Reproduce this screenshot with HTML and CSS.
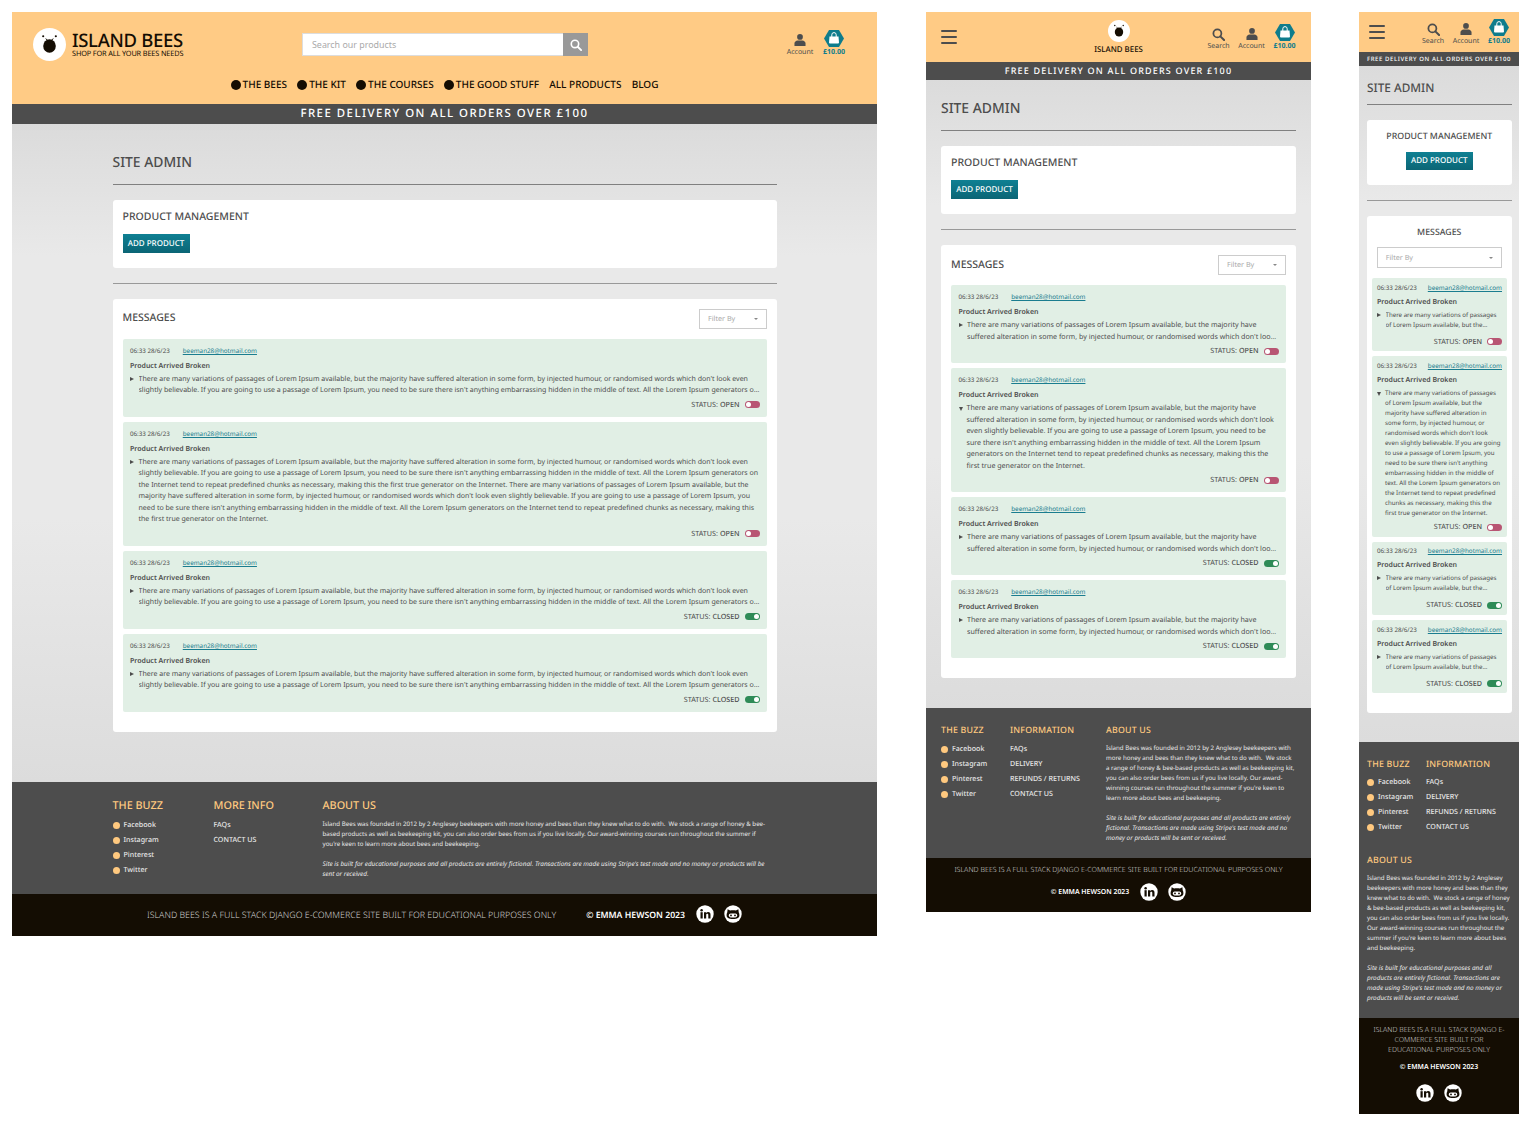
FILE: index.html
```html
<!DOCTYPE html>
<html lang="en">
<head>
    <meta charset="UTF-8">
    <meta name="viewport" content="width=device-width, initial-scale=1.0">
    <title>Island Bees - Site Admin</title>
    <link rel="stylesheet" href="styles.css">
</head>
<body>

<!-- shared icons -->
<svg class="sprite" width="0" height="0">
    <symbol id="i-logo" viewBox="0 0 34 34">
        <circle cx="17" cy="17" r="17" fill="#fff"/>
        <ellipse cx="17" cy="18.500" rx="6.500" ry="7" fill="#140d03"/>
        <circle cx="10.500" cy="8.500" r="1.100" fill="#140d03"/>
        <circle cx="23.500" cy="8.500" r="1.100" fill="#140d03"/>
        <path d="M13 11l2 1.500M21 11l-2 1.500" stroke="#140d03" stroke-width="1"/>
    </symbol>
    <symbol id="i-search" viewBox="0 0 14 14">
        <circle cx="5.800" cy="5.800" r="4.300" fill="none" stroke="currentColor" stroke-width="1.900"/>
        <path d="M9 9l4 4" stroke="currentColor" stroke-width="2.200" stroke-linecap="round"/>
    </symbol>
    <symbol id="i-account" viewBox="0 0 12 13">
        <circle cx="6" cy="3.200" r="3.100" fill="currentColor"/>
        <path d="M0 13v-2.600C0 8.400 1.600 7 3.400 7h5.200C10.400 7 12 8.400 12 10.400V13z" fill="currentColor"/>
    </symbol>
    <symbol id="i-cart" viewBox="0 0 20 17">
        <path d="M5 0h10l5 8.500-5 8.500H5L0 8.500z" fill="#0e7c8c"/>
        <path d="M5.500 6.500h9l.5 6a1 1 0 0 1-1 1H6a1 1 0 0 1-1-1z" fill="#fff"/>
        <path d="M7.800 7V4.800a2.200 2.200 0 0 1 4.400 0V7" fill="none" stroke="#fff" stroke-width="1"/>
    </symbol>
    <symbol id="i-linkedin" viewBox="0 0 18 18">
        <circle cx="9" cy="9" r="8.700" fill="#fff"/>
        <circle cx="5.600" cy="5.200" r="1.250" fill="#140d03"/>
        <rect x="4.500" y="7.200" width="2.200" height="6.300" fill="#140d03"/>
        <path d="M8 7.200h2.100v.9c.5-.7 1.200-1.100 2.100-1.100 1.600 0 2.300 1 2.300 2.700v3.800h-2.200v-3.400c0-.8-.3-1.300-1-1.300s-1.100.5-1.100 1.300v3.400H8z" fill="#140d03"/>
    </symbol>
    <symbol id="i-github" viewBox="0 0 18 18">
        <circle cx="9" cy="9" r="8.700" fill="#fff"/>
        <path d="M3.600 4.300l2.500 1.300c1.900-.5 3.900-.5 5.800 0l2.500-1.300.3 3c.6 1 .7 2 .7 3 0 2.600-2 3.700-6.400 3.700s-6.400-1.100-6.400-3.700c0-1 .1-2 .7-3z" fill="#140d03"/>
        <rect x="4.800" y="8.400" width="8.400" height="4" rx="1.800" fill="#fff"/>
        <circle cx="7" cy="10.400" r=".9" fill="#140d03"/>
        <circle cx="11" cy="10.400" r=".9" fill="#140d03"/>
    </symbol>
</svg>

<div class="canvas">

    <!-- desktop -->
    <div class="frame frame-lg">
        <header class="header">
            <div class="head-top">
                <a class="brand">
                    <svg class="brand-logo"><use href="#i-logo"/></svg>
                    <span class="brand-text">
                        <span class="brand-name">ISLAND BEES</span>
                        <span class="brand-sub">SHOP FOR ALL YOUR BEES NEEDS</span>
                    </span>
                </a>
                <form class="search">
                    <input type="text" placeholder="Search our products">
                    <button type="button"><svg class="search-icon"><use href="#i-search"/></svg></button>
                </form>
                <div class="shop-links">
                    <a class="shop-item"><svg class="ico-account"><use href="#i-account"/></svg><span>Account</span></a>
                    <a class="shop-item cart"><svg class="ico-cart"><use href="#i-cart"/></svg><span>£10.00</span></a>
                </div>
            </div>
            <nav class="nav">
                <a class="dot">THE BEES</a>
                <a class="dot">THE KIT</a>
                <a class="dot">THE COURSES</a>
                <a class="dot">THE GOOD STUFF</a>
                <a>ALL PRODUCTS</a>
                <a>BLOG</a>
            </nav>
        </header>
        <div class="banner">FREE DELIVERY ON ALL ORDERS OVER £100</div>
        <main class="main">
            <h1 class="page-title">SITE ADMIN</h1>
            <section class="card card-products">
                <h2>PRODUCT MANAGEMENT</h2>
                <a class="btn">ADD PRODUCT</a>
            </section>
            <hr class="rule">
            <section class="card card-messages">
                <div class="messages-head">
                    <h2>MESSAGES</h2>
                    <div class="filter"><span>Filter By</span><i class="caret"></i></div>
                </div>
                <article class="msg">
                    <div class="msg-meta"><span>06:33 28/6/23</span><a>beeman28@hotmail.com</a></div>
                    <div class="msg-title">Product Arrived Broken</div>
                    <div class="msg-body"><i class="tri"></i><p class="msg-text clamp">There are many variations of passages of Lorem Ipsum available, but the majority have suffered alteration in some form, by injected humour, or randomised words which don't look even slightly believable. If you are going to use a passage of Lorem Ipsum, you need to be sure there isn't anything embarrassing hidden in the middle of text. All the Lorem Ipsum generators on the Internet tend to repeat predefined chunks as necessary, making this the first true generator on the Internet.</p></div>
                    <div class="msg-status">STATUS: <b>OPEN</b><i class="toggle open"></i></div>
                </article>
                <article class="msg">
                    <div class="msg-meta"><span>06:33 28/6/23</span><a>beeman28@hotmail.com</a></div>
                    <div class="msg-title">Product Arrived Broken</div>
                    <div class="msg-body"><i class="tri"></i><p class="msg-text">There are many variations of passages of Lorem Ipsum available, but the majority have suffered alteration in some form, by injected humour, or randomised words which don't look even slightly believable. If you are going to use a passage of Lorem Ipsum, you need to be sure there isn't anything embarrassing hidden in the middle of text. All the Lorem Ipsum generators on the Internet tend to repeat predefined chunks as necessary, making this the first true generator on the Internet. There are many variations of passages of Lorem Ipsum available, but the majority have suffered alteration in some form, by injected humour, or randomised words which don't look even slightly believable. If you are going to use a passage of Lorem Ipsum, you need to be sure there isn't anything embarrassing hidden in the middle of text. All the Lorem Ipsum generators on the Internet tend to repeat predefined chunks as necessary, making this the first true generator on the Internet.</p></div>
                    <div class="msg-status">STATUS: <b>OPEN</b><i class="toggle open"></i></div>
                </article>
                <article class="msg">
                    <div class="msg-meta"><span>06:33 28/6/23</span><a>beeman28@hotmail.com</a></div>
                    <div class="msg-title">Product Arrived Broken</div>
                    <div class="msg-body"><i class="tri"></i><p class="msg-text clamp">There are many variations of passages of Lorem Ipsum available, but the majority have suffered alteration in some form, by injected humour, or randomised words which don't look even slightly believable. If you are going to use a passage of Lorem Ipsum, you need to be sure there isn't anything embarrassing hidden in the middle of text. All the Lorem Ipsum generators on the Internet tend to repeat predefined chunks as necessary, making this the first true generator on the Internet.</p></div>
                    <div class="msg-status">STATUS: <b>CLOSED</b><i class="toggle closed"></i></div>
                </article>
                <article class="msg">
                    <div class="msg-meta"><span>06:33 28/6/23</span><a>beeman28@hotmail.com</a></div>
                    <div class="msg-title">Product Arrived Broken</div>
                    <div class="msg-body"><i class="tri"></i><p class="msg-text clamp">There are many variations of passages of Lorem Ipsum available, but the majority have suffered alteration in some form, by injected humour, or randomised words which don't look even slightly believable. If you are going to use a passage of Lorem Ipsum, you need to be sure there isn't anything embarrassing hidden in the middle of text. All the Lorem Ipsum generators on the Internet tend to repeat predefined chunks as necessary, making this the first true generator on the Internet.</p></div>
                    <div class="msg-status">STATUS: <b>CLOSED</b><i class="toggle closed"></i></div>
                </article>
            </section>
        </main>
        <footer class="footer">
            <div class="foot-col col-buzz">
                <h3>THE BUZZ</h3>
                <ul class="foot-list bees">
                    <li>Facebook</li>
                    <li>Instagram</li>
                    <li>Pinterest</li>
                    <li>Twitter</li>
                </ul>
            </div>
            <div class="foot-col col-info">
                <h3>MORE INFO</h3>
                <ul class="foot-list">
                    <li>FAQs</li>
                    <li>CONTACT US</li>
                </ul>
            </div>
            <div class="foot-col col-about">
                <h3>ABOUT US</h3>
                <p>Island Bees was founded in 2012 by 2 Anglesey beekeepers with more honey and bees than they knew what to do with.&nbsp; We stock a range of honey &amp; bee-based products as well as beekeeping kit, you can also order bees from us if you live locally. Our award-winning courses run throughout the summer if you're keen to learn more about bees and beekeeping.</p>
                <p class="note">Site is built for educational purposes and all products are entirely fictional. Transactions are made using Stripe's test mode and no money or products will be sent or received.</p>
            </div>
        </footer>
        <div class="foot-bar">
            <span class="foot-blurb">ISLAND BEES IS A FULL STACK DJANGO E-COMMERCE SITE BUILT FOR EDUCATIONAL PURPOSES ONLY</span>
            <span class="foot-copy">© EMMA HEWSON 2023</span>
            <span class="foot-social"><svg><use href="#i-linkedin"/></svg><svg><use href="#i-github"/></svg></span>
        </div>
    </div>

    <!-- tablet -->
    <div class="frame frame-md">
        <header class="header">
            <div class="burger"><i></i><i></i><i></i></div>
            <a class="brand">
                <svg class="brand-logo"><use href="#i-logo"/></svg>
                <span class="brand-name">ISLAND BEES</span>
            </a>
            <div class="shop-links">
                <a class="shop-item"><svg class="ico-search"><use href="#i-search"/></svg><span>Search</span></a>
                <a class="shop-item"><svg class="ico-account"><use href="#i-account"/></svg><span>Account</span></a>
                <a class="shop-item cart"><svg class="ico-cart"><use href="#i-cart"/></svg><span>£10.00</span></a>
            </div>
        </header>
        <div class="banner">FREE DELIVERY ON ALL ORDERS OVER £100</div>
        <main class="main">
            <h1 class="page-title">SITE ADMIN</h1>
            <section class="card card-products">
                <h2>PRODUCT MANAGEMENT</h2>
                <a class="btn">ADD PRODUCT</a>
            </section>
            <hr class="rule">
            <section class="card card-messages">
                <div class="messages-head">
                    <h2>MESSAGES</h2>
                    <div class="filter"><span>Filter By</span><i class="caret"></i></div>
                </div>
                <article class="msg">
                    <div class="msg-meta"><span>06:33 28/6/23</span><a>beeman28@hotmail.com</a></div>
                    <div class="msg-title">Product Arrived Broken</div>
                    <div class="msg-body"><i class="tri"></i><p class="msg-text clamp">There are many variations of passages of Lorem Ipsum available, but the majority have suffered alteration in some form, by injected humour, or randomised words which don't look even slightly believable. If you are going to use a passage of Lorem Ipsum, you need to be sure there isn't anything embarrassing hidden in the middle of text. All the Lorem Ipsum generators on the Internet tend to repeat predefined chunks as necessary, making this the first true generator on the Internet.</p></div>
                    <div class="msg-status">STATUS: <b>OPEN</b><i class="toggle open"></i></div>
                </article>
                <article class="msg">
                    <div class="msg-meta"><span>06:33 28/6/23</span><a>beeman28@hotmail.com</a></div>
                    <div class="msg-title">Product Arrived Broken</div>
                    <div class="msg-body"><i class="tri down"></i><p class="msg-text">There are many variations of passages of Lorem Ipsum available, but the majority have suffered alteration in some form, by injected humour, or randomised words which don't look even slightly believable. If you are going to use a passage of Lorem Ipsum, you need to be sure there isn't anything embarrassing hidden in the middle of text. All the Lorem Ipsum generators on the Internet tend to repeat predefined chunks as necessary, making this the first true generator on the Internet.</p></div>
                    <div class="msg-status">STATUS: <b>OPEN</b><i class="toggle open"></i></div>
                </article>
                <article class="msg">
                    <div class="msg-meta"><span>06:33 28/6/23</span><a>beeman28@hotmail.com</a></div>
                    <div class="msg-title">Product Arrived Broken</div>
                    <div class="msg-body"><i class="tri"></i><p class="msg-text clamp">There are many variations of passages of Lorem Ipsum available, but the majority have suffered alteration in some form, by injected humour, or randomised words which don't look even slightly believable. If you are going to use a passage of Lorem Ipsum, you need to be sure there isn't anything embarrassing hidden in the middle of text. All the Lorem Ipsum generators on the Internet tend to repeat predefined chunks as necessary, making this the first true generator on the Internet.</p></div>
                    <div class="msg-status">STATUS: <b>CLOSED</b><i class="toggle closed"></i></div>
                </article>
                <article class="msg">
                    <div class="msg-meta"><span>06:33 28/6/23</span><a>beeman28@hotmail.com</a></div>
                    <div class="msg-title">Product Arrived Broken</div>
                    <div class="msg-body"><i class="tri"></i><p class="msg-text clamp">There are many variations of passages of Lorem Ipsum available, but the majority have suffered alteration in some form, by injected humour, or randomised words which don't look even slightly believable. If you are going to use a passage of Lorem Ipsum, you need to be sure there isn't anything embarrassing hidden in the middle of text. All the Lorem Ipsum generators on the Internet tend to repeat predefined chunks as necessary, making this the first true generator on the Internet.</p></div>
                    <div class="msg-status">STATUS: <b>CLOSED</b><i class="toggle closed"></i></div>
                </article>
            </section>
        </main>
        <footer class="footer">
            <div class="foot-col col-buzz">
                <h3>THE BUZZ</h3>
                <ul class="foot-list bees">
                    <li>Facebook</li>
                    <li>Instagram</li>
                    <li>Pinterest</li>
                    <li>Twitter</li>
                </ul>
            </div>
            <div class="foot-col col-info">
                <h3>INFORMATION</h3>
                <ul class="foot-list">
                    <li>FAQs</li>
                    <li>DELIVERY</li>
                    <li>REFUNDS / RETURNS</li>
                    <li>CONTACT US</li>
                </ul>
            </div>
            <div class="foot-col col-about">
                <h3>ABOUT US</h3>
                <p>Island Bees was founded in 2012 by 2 Anglesey beekeepers with more honey and bees than they knew what to do with.&nbsp; We stock a range of honey &amp; bee-based products as well as beekeeping kit, you can also order bees from us if you live locally. Our award-winning courses run throughout the summer if you're keen to learn more about bees and beekeeping.</p>
                <p class="note">Site is built for educational purposes and all products are entirely fictional. Transactions are made using Stripe's test mode and no money or products will be sent or received.</p>
            </div>
        </footer>
        <div class="foot-bar">
            <span class="foot-blurb">ISLAND BEES IS A FULL STACK DJANGO E-COMMERCE SITE BUILT FOR EDUCATIONAL PURPOSES ONLY</span>
            <div class="foot-row">
                <span class="foot-copy">© EMMA HEWSON 2023</span>
                <span class="foot-social"><svg><use href="#i-linkedin"/></svg><svg><use href="#i-github"/></svg></span>
            </div>
        </div>
    </div>

    <!-- mobile -->
    <div class="frame frame-sm">
        <header class="header">
            <div class="burger"><i></i><i></i><i></i></div>
            <div class="shop-links">
                <a class="shop-item"><svg class="ico-search"><use href="#i-search"/></svg><span>Search</span></a>
                <a class="shop-item"><svg class="ico-account"><use href="#i-account"/></svg><span>Account</span></a>
                <a class="shop-item cart"><svg class="ico-cart"><use href="#i-cart"/></svg><span>£10.00</span></a>
            </div>
        </header>
        <div class="banner">FREE DELIVERY ON ALL ORDERS OVER £100</div>
        <main class="main">
            <h1 class="page-title">SITE ADMIN</h1>
            <section class="card card-products">
                <h2>PRODUCT MANAGEMENT</h2>
                <a class="btn">ADD PRODUCT</a>
            </section>
            <hr class="rule">
            <section class="card card-messages">
                <div class="messages-head">
                    <h2>MESSAGES</h2>
                    <div class="filter"><span>Filter By</span><i class="caret"></i></div>
                </div>
                <article class="msg">
                    <div class="msg-meta"><span>06:33 28/6/23</span><a>beeman28@hotmail.com</a></div>
                    <div class="msg-title">Product Arrived Broken</div>
                    <div class="msg-body"><i class="tri"></i><p class="msg-text clamp">There are many variations of passages of Lorem Ipsum available, but the majority have suffered alteration in some form, by injected humour, or randomised words which don't look even slightly believable. If you are going to use a passage of Lorem Ipsum, you need to be sure there isn't anything embarrassing hidden in the middle of text. All the Lorem Ipsum generators on the Internet tend to repeat predefined chunks as necessary, making this the first true generator on the Internet.</p></div>
                    <div class="msg-status">STATUS: <b>OPEN</b><i class="toggle open"></i></div>
                </article>
                <article class="msg">
                    <div class="msg-meta"><span>06:33 28/6/23</span><a>beeman28@hotmail.com</a></div>
                    <div class="msg-title">Product Arrived Broken</div>
                    <div class="msg-body"><i class="tri down"></i><p class="msg-text">There are many variations of passages of Lorem Ipsum available, but the majority have suffered alteration in some form, by injected humour, or randomised words which don't look even slightly believable. If you are going to use a passage of Lorem Ipsum, you need to be sure there isn't anything embarrassing hidden in the middle of text. All the Lorem Ipsum generators on the Internet tend to repeat predefined chunks as necessary, making this the first true generator on the Internet.</p></div>
                    <div class="msg-status">STATUS: <b>OPEN</b><i class="toggle open"></i></div>
                </article>
                <article class="msg">
                    <div class="msg-meta"><span>06:33 28/6/23</span><a>beeman28@hotmail.com</a></div>
                    <div class="msg-title">Product Arrived Broken</div>
                    <div class="msg-body"><i class="tri"></i><p class="msg-text clamp">There are many variations of passages of Lorem Ipsum available, but the majority have suffered alteration in some form, by injected humour, or randomised words which don't look even slightly believable. If you are going to use a passage of Lorem Ipsum, you need to be sure there isn't anything embarrassing hidden in the middle of text. All the Lorem Ipsum generators on the Internet tend to repeat predefined chunks as necessary, making this the first true generator on the Internet.</p></div>
                    <div class="msg-status">STATUS: <b>CLOSED</b><i class="toggle closed"></i></div>
                </article>
                <article class="msg">
                    <div class="msg-meta"><span>06:33 28/6/23</span><a>beeman28@hotmail.com</a></div>
                    <div class="msg-title">Product Arrived Broken</div>
                    <div class="msg-body"><i class="tri"></i><p class="msg-text clamp">There are many variations of passages of Lorem Ipsum available, but the majority have suffered alteration in some form, by injected humour, or randomised words which don't look even slightly believable. If you are going to use a passage of Lorem Ipsum, you need to be sure there isn't anything embarrassing hidden in the middle of text. All the Lorem Ipsum generators on the Internet tend to repeat predefined chunks as necessary, making this the first true generator on the Internet.</p></div>
                    <div class="msg-status">STATUS: <b>CLOSED</b><i class="toggle closed"></i></div>
                </article>
            </section>
        </main>
        <footer class="footer">
            <div class="foot-col col-buzz">
                <h3>THE BUZZ</h3>
                <ul class="foot-list bees">
                    <li>Facebook</li>
                    <li>Instagram</li>
                    <li>Pinterest</li>
                    <li>Twitter</li>
                </ul>
            </div>
            <div class="foot-col col-info">
                <h3>INFORMATION</h3>
                <ul class="foot-list">
                    <li>FAQs</li>
                    <li>DELIVERY</li>
                    <li>REFUNDS / RETURNS</li>
                    <li>CONTACT US</li>
                </ul>
            </div>
            <div class="foot-col col-about">
                <h3>ABOUT US</h3>
                <p>Island Bees was founded in 2012 by 2 Anglesey beekeepers with more honey and bees than they knew what to do with.&nbsp; We stock a range of honey &amp; bee-based products as well as beekeeping kit, you can also order bees from us if you live locally. Our award-winning courses run throughout the summer if you're keen to learn more about bees and beekeeping.</p>
                <p class="note">Site is built for educational purposes and all products are entirely fictional. Transactions are made using Stripe's test mode and no money or products will be sent or received.</p>
            </div>
        </footer>
        <div class="foot-bar">
            <span class="foot-blurb">ISLAND BEES IS A FULL STACK DJANGO E-COMMERCE SITE BUILT FOR EDUCATIONAL PURPOSES ONLY</span>
            <span class="foot-copy">© EMMA HEWSON 2023</span>
            <span class="foot-social"><svg><use href="#i-linkedin"/></svg><svg><use href="#i-github"/></svg></span>
        </div>
    </div>

</div>

</body>
</html>
```

FILE: styles.css
```css
* {
    box-sizing: border-box;
}
body {
    margin: 0;
    background-color: #fff;
    font-family: "Noto Sans", Arial, sans-serif;
    color: #4d4d4d;
    text-rendering: geometricPrecision;
}
h1, h2, h3, p, ul {
    margin: 0;
    padding: 0;
    font-weight: 500;
}
ul {
    list-style: none;
}
.sprite {
    position: absolute;
}
.canvas {
    display: flex;
    align-items: flex-start;
    padding: 12px 0 0 12px;
}
.frame {
    flex: none;
}
.frame-lg {
    width: 865px;
    margin-right: 49px;
}
.frame-md {
    width: 385px;
    margin-right: 48px;
}
.frame-sm {
    width: 160px;
}

/* header */
.header {
    background-color: #ffcb85;
    color: #140d03;
}
.brand {
    display: flex;
    align-items: center;
}
.brand-logo {
    flex: none;
}
.brand-name {
    font-weight: 500;
}
.shop-links {
    display: flex;
    align-items: flex-end;
}
.shop-item {
    display: flex;
    flex-direction: column;
    align-items: center;
    width: 33px;
    font-size: 7px;
    line-height: 8px;
    color: #4d4d4d;
}
.shop-item.cart {
    color: #0e7c8c;
    font-weight: 700;
}
.ico-cart {
    width: 20px;
    height: 17px;
    margin-bottom: 2px;
}
.ico-account {
    width: 12px;
    height: 12px;
    margin-bottom: 3px;
}
.ico-search {
    width: 13px;
    height: 13px;
    margin-bottom: 2px;
}
.burger {
    display: flex;
    flex-direction: column;
    gap: 3.800px;
    width: 16px;
}
.burger i {
    display: block;
    height: 2.400px;
    border-radius: 2px;
    background-color: #4d4d4d;
}

.frame-lg .header {
    height: 91.500px;
    padding-top: 14.500px;
}
.head-top {
    display: flex;
    align-items: center;
    height: 36px;
    padding: 0 26px 0 21px;
}
.frame-lg .brand {
    width: 269px;
}
.frame-lg .brand-logo {
    width: 33px;
    height: 33px;
    margin-right: 6px;
}
.brand-text {
    display: flex;
    flex-direction: column;
}
.frame-lg .brand-name {
    font-size: 18.500px;
    line-height: 19px;
    letter-spacing: -0.3px;
}
.brand-sub {
    font-size: 7.350px;
    line-height: 9px;
    letter-spacing: -0.15px;
}
.search {
    display: flex;
    width: 286px;
    height: 23px;
    margin: 0;
}
.search input {
    flex: 1;
    min-width: 0;
    padding: 0 9px;
    border: 1px solid #ddd;
    border-right: 0;
    background-color: #fff;
    font-family: inherit;
    font-size: 8.900px;
    color: #999;
}
.search input::placeholder {
    color: #aaa;
}
.search button {
    display: flex;
    align-items: center;
    justify-content: center;
    width: 25px;
    padding: 0;
    border: 0;
    background-color: #999;
    color: #fff;
}
.search-icon {
    width: 12px;
    height: 12px;
}
.frame-lg .shop-links {
    margin: 0 0 3px auto;
}
.frame-lg .shop-item {
    width: 34px;
}
.nav {
    display: flex;
    justify-content: center;
    gap: 10.200px;
    height: 14px;
    margin-top: 14.500px;
    font-size: 10px;
    line-height: 14px;
    font-weight: 500;
}
.nav .dot::before {
    content: "";
    display: inline-block;
    width: 10px;
    height: 10px;
    margin-right: 2px;
    border-radius: 50%;
    background-color: #140d03;
    vertical-align: -1.500px;
}

.frame-md .header {
    display: grid;
    grid-template-columns: 1fr auto 1fr;
    align-items: center;
    height: 50px;
    padding: 0 10px;
}
.frame-md .burger {
    margin-left: 5px;
}
.frame-md .brand {
    flex-direction: column;
}
.frame-md .brand-logo {
    width: 22px;
    height: 22px;
}
.frame-md .brand-name {
    margin-top: 3px;
    font-size: 7.900px;
    line-height: 10px;
}
.frame-md .shop-links {
    justify-self: end;
}

.frame-sm .header {
    display: flex;
    align-items: center;
    justify-content: space-between;
    height: 40px;
    padding: 0 3.500px 0 10px;
}

/* delivery strip */
.banner {
    height: 20px;
    background-color: #4d4d4d;
    color: #fff;
    text-align: center;
    font-size: 11.400px;
    line-height: 20px;
    font-weight: 500;
    letter-spacing: 1.500px;
}
.frame-md .banner {
    height: 18px;
    font-size: 9px;
    line-height: 18px;
    letter-spacing: 1.180px;
}
.frame-sm .banner {
    height: 14px;
    font-size: 6px;
    line-height: 14px;
    letter-spacing: .58px;
}

/* main */
.main {
    background: linear-gradient(#dbdbdb, #e9e9e9 20%, #e9e9e9 60%, #dcdcdc);
}
.frame-lg .main {
    padding: 28px 100px 50.500px 100.500px;
}
.frame-md .main {
    padding: 18px 15px 30px;
}
.frame-sm .main {
    padding: 14px 7.500px 28.400px 8px;
}
.page-title {
    padding-bottom: 10px;
    border-bottom: 1px solid #808080;
    font-size: 13.900px;
    line-height: 22px;
}
.frame-sm .page-title {
    padding-bottom: 7px;
    font-size: 11.800px;
    line-height: 17px;
}
.card {
    padding: 10px;
    border-radius: 3px;
    background-color: #fff;
}
.card h2 {
    font-size: 10.500px;
    line-height: 15px;
}
.frame-sm .card h2 {
    font-size: 8.800px;
    line-height: 13px;
}
.card-products {
    height: 68px;
    margin-top: 15px;
}
.btn {
    display: block;
    width: 67px;
    height: 19px;
    margin-top: 9px;
    background: linear-gradient(#0f8093, #0b6575);
    color: #fff;
    text-align: center;
    font-size: 8px;
    line-height: 19px;
    font-weight: 500;
}
.frame-sm .card-products {
    height: 65px;
    text-align: center;
}
.frame-sm .btn {
    height: 18px;
    margin: 9px auto 0;
    line-height: 18px;
}
.rule {
    height: 1px;
    margin: 15px 0;
    border: 0;
    background-color: #999;
}
.card-messages {
    padding-bottom: 20px;
}
.messages-head {
    display: flex;
    align-items: center;
    justify-content: space-between;
    height: 20px;
    margin-bottom: 10px;
}
.filter {
    display: flex;
    align-items: center;
    justify-content: space-between;
    width: 68px;
    height: 20px;
    padding: 0 8px;
    border: 1px solid #ccc;
    font-size: 7.200px;
    color: #aaa;
}
.caret {
    width: 0;
    height: 0;
    border: 2.500px solid transparent;
    border-top: 2.500px solid #888;
    border-bottom: 0;
}
.frame-sm .card-messages {
    padding: 9.500px 5px 20px;
}
.frame-sm .messages-head {
    flex-direction: column;
    height: auto;
    margin-bottom: 10px;
}
.frame-sm .filter {
    width: 125px;
    height: 21px;
    margin-top: 8.500px;
}

/* message rows */
.msg {
    padding: 7px 7.500px 7px;
    border-radius: 2px;
    background-color: #e1efe5;
    font-size: 7.200px;
}
.msg + .msg {
    margin-top: 5px;
}
.msg-meta {
    display: flex;
    gap: 13px;
    height: 10px;
    line-height: 10px;
    font-size: 6.200px;
}
.msg-meta a {
    color: #1a7d8f;
    text-decoration: underline;
    font-size: 6.300px;
}
.msg-title {
    height: 10px;
    margin-top: 6px;
    font-size: 7px;
    line-height: 10px;
    font-weight: 600;
}
.msg-body {
    display: flex;
    margin-top: 2px;
}
.tri {
    flex: none;
    width: 0;
    height: 0;
    margin: 3px 4.500px 0 0;
    border-left: 4.500px solid #4d4d4d;
    border-top: 2.500px solid transparent;
    border-bottom: 2.500px solid transparent;
}
.tri.down {
    margin: 4px 4px 0 0;
    border-top: 4.500px solid #4d4d4d;
    border-left: 2.500px solid transparent;
    border-right: 2.500px solid transparent;
    border-bottom: 0;
}
.msg-text {
    flex: 1;
    min-width: 0;
    font-size: 7.100px;
    line-height: 11.500px;
    font-weight: 400;
}
.frame-lg .msg-text {
    font-size: 7.030px;
}
.msg-text.clamp {
    display: -webkit-box;
    -webkit-box-orient: vertical;
    -webkit-line-clamp: 2;
    overflow: hidden;
}
.msg-status {
    display: flex;
    align-items: center;
    justify-content: flex-end;
    gap: 2px;
    height: 10px;
    margin-top: 3px;
}
.msg-status b {
    font-weight: 500;
}
.toggle {
    position: relative;
    width: 15px;
    height: 7px;
    margin-left: 3px;
    border-radius: 4px;
}
.toggle.open {
    background-color: #b85573;
}
.toggle.closed {
    background-color: #2e8b57;
}
.toggle::after {
    content: "";
    position: absolute;
    top: 1px;
    width: 5px;
    height: 5px;
    border-radius: 50%;
    background-color: #fff;
}
.toggle.open::after {
    left: 1px;
}
.toggle.closed::after {
    right: 1px;
}
.frame-sm .msg {
    padding: 4.500px 4.500px 4.700px 5px;
}
.frame-sm .msg-title {
    margin-top: 5px;
}
.frame-sm .msg-meta {
    justify-content: space-between;
    gap: 0;
}
.frame-sm .msg-text {
    font-size: 6.150px;
    line-height: 10px;
}
.frame-sm .msg-text.clamp {
    margin-bottom: 2.500px;
}
.frame-sm .msg-status {
    margin-top: 4.500px;
}

/* footer */
.footer {
    display: flex;
    background-color: #4d4d4d;
    color: #e8e8e8;
}
.foot-col h3 {
    height: 12px;
    color: #ffc97f;
    font-size: 10.800px;
    line-height: 12px;
}
.frame-md .foot-col h3, .frame-sm .foot-col h3 {
    font-size: 8.800px;
    letter-spacing: .2px;
}
.foot-list li {
    font-size: 7.100px;
    line-height: 15px;
}
.foot-list.bees li {
    display: flex;
    align-items: center;
}
.foot-list.bees li::before {
    content: "";
    flex: none;
    width: 7px;
    height: 7px;
    margin-right: 4px;
    border-radius: 50%;
    background-color: #ffc97f;
}
.col-about p {
    font-size: 6.150px;
    line-height: 10px;
    font-weight: 400;
}
.col-about .note {
    margin-top: 10px;
    font-size: 6.400px;
    font-style: italic;
}
.frame-lg .footer {
    padding: 18px 110px 15px 100.500px;
}
.frame-lg .foot-col h3 {
    margin-bottom: 6px;
}
.frame-lg .col-about h3 {
    margin-bottom: 7px;
}
.frame-lg .col-buzz {
    width: 101px;
}
.frame-lg .col-info {
    width: 109px;
}
.frame-lg .col-about {
    flex: 1;
}
.frame-md .footer {
    padding: 16px 15px 15.500px;
}
.frame-md .foot-col h3 {
    margin-bottom: 6px;
}
.frame-md .col-about h3 {
    margin-bottom: 6.500px;
}
.frame-md .col-buzz {
    width: 69px;
}
.frame-md .col-info {
    width: 96px;
}
.frame-md .col-about {
    flex: 1;
}
.frame-sm .footer {
    flex-wrap: wrap;
    padding: 16px 8px 15px;
}
.frame-sm .foot-col h3 {
    margin-bottom: 5.500px;
}
.frame-sm .col-buzz {
    width: 59px;
}
.frame-sm .col-info {
    width: 85px;
}
.frame-sm .col-about {
    width: 100%;
    margin-top: 19px;
}
.frame-sm .col-about h3 {
    margin-bottom: 6.500px;
}

/* bottom bar */
.foot-bar {
    display: flex;
    align-items: center;
    background-color: #140d03;
    color: #fff;
}
.foot-blurb {
    color: #d0d0d0;
    font-weight: 300;
}
.foot-copy {
    font-weight: 600;
}
.foot-social {
    display: flex;
    gap: 10px;
}
.foot-social svg {
    width: 18px;
    height: 18px;
}
.frame-lg .foot-bar {
    justify-content: center;
    height: 42px;
}
.frame-lg .foot-blurb {
    margin-right: 30px;
    font-size: 8.860px;
}
.frame-lg .foot-copy {
    margin-right: 11px;
    font-size: 8.700px;
}
.frame-lg .foot-social {
    margin-top: -3px;
}
.frame-md .foot-bar {
    flex-direction: column;
    height: 54px;
    padding-top: 7px;
}
.frame-md .foot-blurb {
    height: 10px;
    font-size: 7.100px;
    line-height: 10px;
}
.foot-row {
    display: flex;
    align-items: center;
    gap: 11px;
    margin-top: 8px;
}
.frame-md .foot-copy {
    font-size: 6.900px;
}
.frame-sm .foot-bar {
    flex-direction: column;
    height: 96px;
    padding-top: 8px;
    text-align: center;
}
.frame-sm .foot-blurb {
    width: 136px;
    font-size: 7px;
    line-height: 10px;
}
.frame-sm .foot-copy {
    margin-top: 7px;
    font-size: 6.900px;
    line-height: 10px;
}
.frame-sm .foot-social {
    margin-top: 11.500px;
}
```
